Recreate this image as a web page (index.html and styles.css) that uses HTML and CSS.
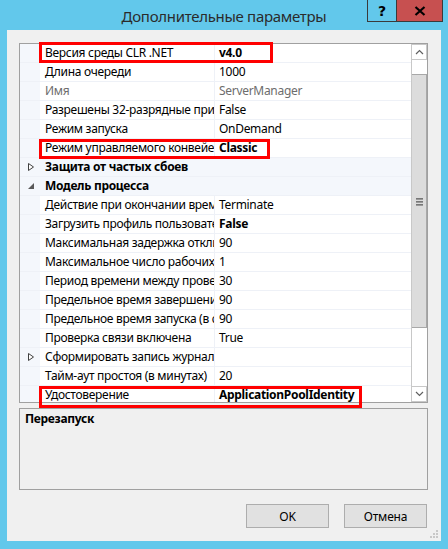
FILE: index.html
```html
<!DOCTYPE html>
<html lang="ru">
<head>
<meta charset="utf-8">
<title>Дополнительные параметры</title>
<link rel="stylesheet" href="styles.css">
</head>
<body>
<div class="window">
  <div class="titlebar">
    <div></div>
    <div class="title">Дополнительные параметры</div>
    <div class="caption-btns">
      <div class="cbtn help">?</div>
      <div class="cbtn close">
        <svg width="12" height="10" viewBox="0 0 12 10"><path d="M1.5 1 L10.5 9 M10.5 1 L1.5 9" stroke="#000" stroke-width="2.2"/></svg>
      </div>
    </div>
  </div>
  <div class="panel">
    <div class="grid">
      <div class="list">
        <div class="row"><div class="gut"></div><div class="lab">Версия среды CLR .NET</div><div class="val b">v4.0</div></div>
        <div class="row"><div class="gut"></div><div class="lab">Длина очереди</div><div class="val">1000</div></div>
        <div class="row dis"><div class="gut"></div><div class="lab">Имя</div><div class="val">ServerManager</div></div>
        <div class="row"><div class="gut"></div><div class="lab">Разрешены 32-разрядные приложения</div><div class="val">False</div></div>
        <div class="row"><div class="gut"></div><div class="lab">Режим запуска</div><div class="val">OnDemand</div></div>
        <div class="row"><div class="gut"></div><div class="lab">Режим управляемого конвейера</div><div class="val b">Classic</div></div>
        <div class="row cat"><div class="gut"><svg width="8" height="10" viewBox="0 0 8 10"><path d="M1.5 1.5 L6.5 5 L1.5 8.5 Z" fill="#fff" stroke="#404040" stroke-width="1"/></svg></div><div class="cname">Защита от частых сбоев</div></div>
        <div class="row cat"><div class="gut"><svg width="8" height="8" viewBox="0 0 8 8"><path d="M7 1 L7 7 L1 7 Z" fill="#595959"/></svg></div><div class="cname">Модель процесса</div></div>
        <div class="row"><div class="gut"></div><div class="lab">Действие при окончании времени простоя</div><div class="val">Terminate</div></div>
        <div class="row"><div class="gut"></div><div class="lab">Загрузить профиль пользователя</div><div class="val b">False</div></div>
        <div class="row"><div class="gut"></div><div class="lab">Максимальная задержка отклика</div><div class="val">90</div></div>
        <div class="row"><div class="gut"></div><div class="lab">Максимальное число рабочих процессов</div><div class="val">1</div></div>
        <div class="row"><div class="gut"></div><div class="lab">Период времени между проверками</div><div class="val">30</div></div>
        <div class="row"><div class="gut"></div><div class="lab">Предельное время завершения</div><div class="val">90</div></div>
        <div class="row"><div class="gut"></div><div class="lab">Предельное время запуска (в секундах)</div><div class="val">90</div></div>
        <div class="row"><div class="gut"></div><div class="lab">Проверка связи включена</div><div class="val">True</div></div>
        <div class="row"><div class="gut"><svg width="8" height="10" viewBox="0 0 8 10"><path d="M1.5 1.5 L6.5 5 L1.5 8.5 Z" fill="#fff" stroke="#404040" stroke-width="1"/></svg></div><div class="lab">Сформировать запись журнала</div><div class="val"></div></div>
        <div class="row"><div class="gut"></div><div class="lab">Тайм-аут простоя (в минутах)</div><div class="val">20</div></div>
        <div class="row"><div class="gut"></div><div class="lab">Удостоверение</div><div class="val b">ApplicationPoolIdentity</div></div>
      </div>
      <div class="scrollbar">
        <div class="sbtn"><svg width="9" height="6" viewBox="0 0 9 6"><path d="M1 5 L4.5 1.5 L8 5" fill="none" stroke="#606060" stroke-width="1.2"/></svg></div>
        <div class="track t1"></div>
        <div class="thumb"><span class="grip"></span><span class="grip"></span><span class="grip"></span></div>
        <div class="track t2"></div>
        <div class="sbtn"><svg width="9" height="6" viewBox="0 0 9 6"><path d="M1 1 L4.5 4.5 L8 1" fill="none" stroke="#606060" stroke-width="1.2"/></svg></div>
      </div>
    </div>
    <div class="desc"><div class="desc-title">Перезапуск</div></div>
    <div class="footer">
      <button class="btn">OK</button>
      <button class="btn">Отмена</button>
    </div>
    <svg class="sizegrip" width="9" height="9" viewBox="0 0 9 9">
      <rect x="7" y="1" width="2" height="2" fill="#c8c8c8"/>
      <rect x="4" y="4" width="2" height="2" fill="#c8c8c8"/>
      <rect x="7" y="4" width="2" height="2" fill="#c8c8c8"/>
      <rect x="1" y="7" width="2" height="2" fill="#c8c8c8"/>
      <rect x="4" y="7" width="2" height="2" fill="#c8c8c8"/>
      <rect x="7" y="7" width="2" height="2" fill="#c8c8c8"/>
    </svg>
    <div class="mark m1"></div>
    <div class="mark m2"></div>
    <div class="mark m3"></div>
  </div>
</div>
</body>
</html>
```

FILE: styles.css
```css
* { box-sizing: border-box; }
html, body { margin: 0; padding: 0; }
body {
  background: #62c8eb;
  font-family: "Noto Sans", "Open Sans", sans-serif;
  font-size: 12px;
  letter-spacing: -0.3px;
  color: #000;
  width: 448px;
  height: 549px;
  overflow: hidden;
}
.window { width: 448px; height: 549px; display: flex; flex-direction: column; }
.titlebar {
  height: 30px;
  display: grid;
  grid-template-columns: 1fr auto 1fr;
  align-items: start;
}
.title {
  font-size: 15px;
  letter-spacing: -0.3px;
  color: #2b2b2b;
  line-height: 30px;
  padding-top: 1px;
  white-space: nowrap;
}
.caption-btns {
  display: flex;
  justify-content: flex-end;
  padding-right: 5px;
}
.cbtn {
  height: 22px;
  border: 1px solid #3a3a3a;
  border-top: none;
  display: flex;
  align-items: center;
  justify-content: center;
}
.help {
  width: 29px;
  font-weight: bold;
  font-size: 14px;
  letter-spacing: 0;
  font-family: "DejaVu Sans", sans-serif;
  color: #000;
  border-right: none;
}
.close { width: 47px; background: #c75050; }
.panel {
  position: relative;
  margin: 0 7px 8px 7px;
  height: 511px;
  background: #f0f0f0;
  padding: 13px 13px 0 12px;
  display: flex;
  flex-direction: column;
}
.grid {
  height: 360px;
  border: 1px solid #a0a0a0;
  background: #fff;
  display: flex;
  overflow: hidden;
}
.list { flex: 1; overflow: hidden; }
.row {
  display: grid;
  grid-template-columns: 20px 175px 1fr;
  height: 19px;
  border-bottom: 1px solid #eef1f7;
  line-height: 18px;
}
.gut {
  background: #f4f7fc;
  display: flex;
  align-items: center;
  justify-content: center;
  padding-left: 2px;
}
.lab {
  padding-left: 5px;
  border-right: 1px solid #eef1f7;
  white-space: nowrap;
  overflow: hidden;
}
.val {
  padding-left: 4px;
  white-space: nowrap;
  overflow: hidden;
}
.b { font-weight: bold; }
.dis { color: #6d6d6d; }
.cat { background: #f4f7fc; grid-template-columns: 20px 1fr; }
.cname { padding-left: 5px; font-weight: bold; white-space: nowrap; }
.scrollbar {
  width: 16px;
  border-left: 1px solid #c8c8c8;
  display: flex;
  flex-direction: column;
  background: #fff;
}
.sbtn {
  height: 16px;
  border: 1px solid #c8c8c8;
  border-left: none;
  display: flex;
  align-items: center;
  justify-content: center;
  background: #fff;
}
.track { background: #fff; }
.t1 { height: 14px; }
.t2 { flex: 1; }
.thumb {
  height: 254px;
  background: #dcdcdc;
  border: 1px solid #a8a8a8;
  border-left: none;
  display: flex;
  flex-direction: column;
  align-items: center;
  gap: 2px;
  padding-top: 123px;
}
.grip { width: 7px; height: 1px; background: #777; box-shadow: 0 1px 0 #999; }
.desc {
  margin-top: 5px;
  height: 82px;
  border: 1px solid #a0a0a0;
  background: #f0f0f0;
  padding: 1px 5px;
}
.desc-title { font-weight: bold; line-height: 18px; }
.footer {
  margin-top: 14px;
  display: flex;
  justify-content: flex-end;
  gap: 15px;
  padding-right: 1px;
}
.btn {
  width: 83px;
  height: 24px;
  background: #e1e1e1;
  border: 1px solid #adadad;
  font-family: "Noto Sans", "Open Sans", sans-serif;
  font-size: 12px;
  letter-spacing: -0.2px;
  color: #000;
  padding: 0;
}
.sizegrip { position: absolute; right: 3px; bottom: 3px; }
.mark { position: absolute; border: 3px solid #ff0000; }
.m1 { left: 32px; top: 12px; width: 234px; height: 21px; }
.m2 { left: 32px; top: 109px; width: 231px; height: 20px; }
.m3 { left: 32px; top: 356px; width: 323px; height: 22px; }
```
